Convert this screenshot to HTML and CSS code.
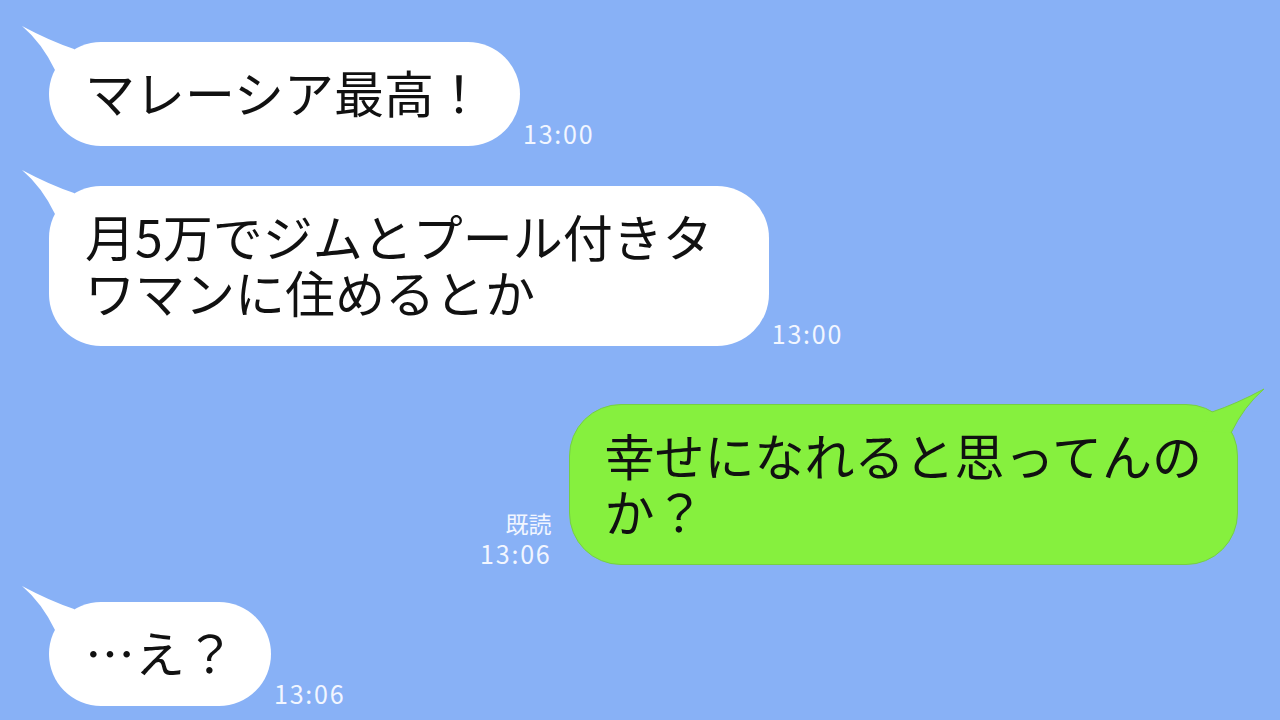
FILE: index.html
```html
<!DOCTYPE html>
<html lang="ja">
<head>
    <meta charset="UTF-8">
    <meta name="viewport" content="width=device-width, initial-scale=1.0">
    <title>トーク</title>
    <link rel="stylesheet" href="styles.css">
</head>
<body>

    <div class="chat">
        <!-- incoming -->
        <div class="row row-in">
            <div class="bubble bubble-in">
                <svg class="tail" viewBox="0 0 60 46" width="60" height="46">
                    <path d="M0 0 Q28 15 52 23 L62 42 L33 44 Q20 17 0 0 Z"/>
                </svg>
                マレーシア最高！
            </div>
            <div class="meta"><span class="time">13:00</span></div>
        </div>

        <div class="row row-in">
            <div class="bubble bubble-in bubble-wide">
                <svg class="tail" viewBox="0 0 60 46" width="60" height="46">
                    <path d="M0 0 Q28 15 52 23 L62 42 L33 44 Q20 17 0 0 Z"/>
                </svg>
                月5万でジムとプール付きタ<br>ワマンに住めるとか
            </div>
            <div class="meta"><span class="time">13:00</span></div>
        </div>

        <!-- outgoing -->
        <div class="row row-out">
            <div class="meta meta-out">
                <span class="read">既読</span>
                <span class="time">13:06</span>
            </div>
            <div class="bubble bubble-out">
                <svg class="tail tail-out" viewBox="0 0 60 46" width="60" height="46">
                    <path d="M0 0 Q28 15 52 23 L62 42 L33 44 Q20 17 0 0 Z"/>
                    <path class="tail-edge" d="M52 23 Q28 15 0 0 Q20 17 33 44"/>
                </svg>
                幸せになれると思ってんの<br>か？
            </div>
        </div>

        <div class="row row-in row-last">
            <div class="bubble bubble-in">
                <svg class="tail" viewBox="0 0 60 46" width="60" height="46">
                    <path d="M0 0 Q28 15 52 23 L62 42 L33 44 Q20 17 0 0 Z"/>
                </svg>
                …え？
            </div>
            <div class="meta"><span class="time">13:06</span></div>
        </div>
    </div>

</body>
</html>
```

FILE: styles.css
```css
body {
    margin: 0;
    padding: 0;
    background-color: #88b1f6;
    font-family: "Noto Sans CJK JP", "Noto Sans", sans-serif;
    min-height: 100vh;
    overflow: hidden;
}
.chat {
    display: flex;
    flex-direction: column;
    gap: 40px;
    padding: 42px 42px 0 49px;
}
.row {
    display: flex;
    align-items: flex-end;
}
.row-out {
    justify-content: flex-end;
    margin-top: 18px;
}
.row-last { margin-top: -3px; }

.bubble {
    position: relative;
    padding: 21px 36px 27px;
    font-size: 50px;
    line-height: 56px;
    color: #111;
    border-radius: 52px;
    white-space: nowrap;
}
.bubble-in { background: #fff; }
.bubble-wide { padding-right: 56px; }
.bubble-out {
    background: #86f03e;
    border: 1px solid #76cf44;
    padding: 21px 35px 26px;
}

/* --- Tails --- */
.tail {
    position: absolute;
    left: -27px;
    top: -16px;
    overflow: visible;
}
.tail path { fill: #fff; }
.tail-out {
    left: auto;
    right: -27px;
    transform: scaleX(-1);
}
.tail-out path { fill: #86f03e; }
.tail-out .tail-edge {
    fill: none;
    stroke: #76cf44;
    stroke-width: 1;
}

/* --- Read / time --- */
.meta {
    display: flex;
    flex-direction: column;
    color: #f2f6ff;
    font-size: 25px;
    line-height: 30px;
    letter-spacing: 1.8px;
    margin-left: 3px;
    margin-bottom: -2px;
}
.meta-out {
    align-items: flex-end;
    margin-left: 0;
    margin-right: 17px;
    margin-bottom: -3px;
}
.read {
    font-size: 23px;
    letter-spacing: 0;
}
```
